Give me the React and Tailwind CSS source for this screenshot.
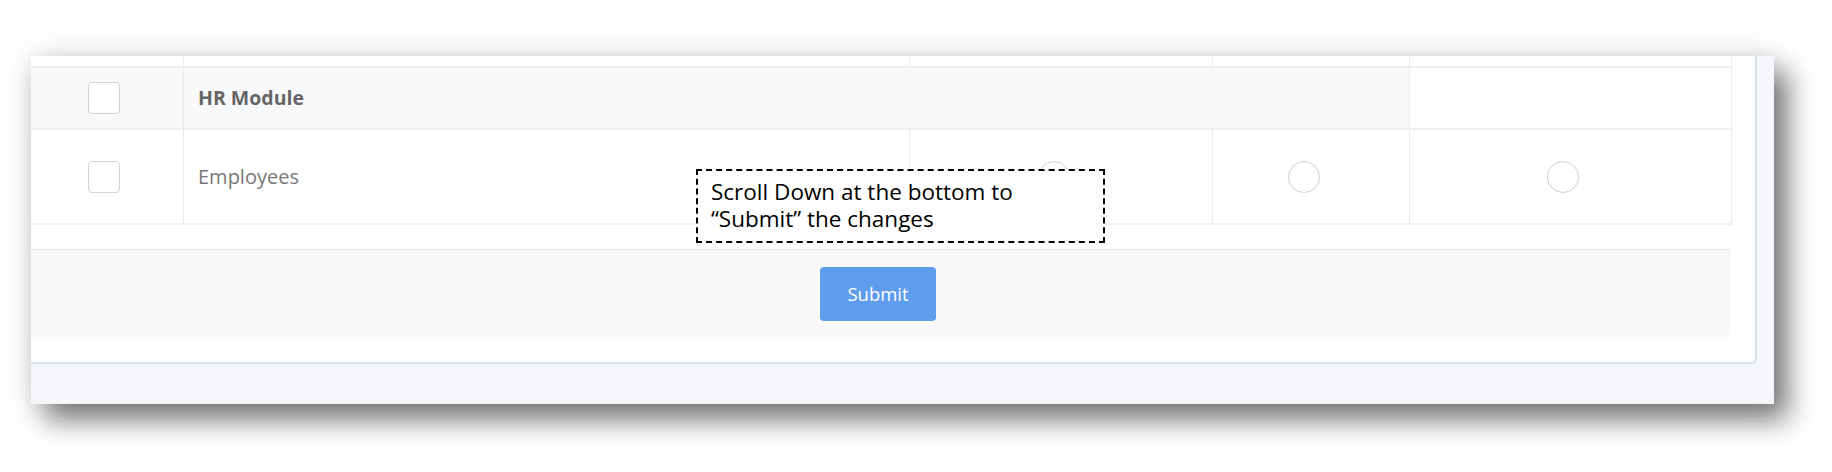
export default function App() {
  const cellBorder = "border-r border-[#ebebeb]";
  return (
    <div className="w-[1832px] h-[472px] bg-white pl-[31px] pt-[56px] font-['Open_Sans',sans-serif]">
      <div className="relative w-[1743px] h-[348px] bg-[#f5f6fa] shadow-[14px_16px_26px_rgba(0,0,0,0.5),0_0_28px_rgba(0,0,0,0.12)]">
        <div className="w-[1726px] h-[308px] bg-white border-r-2 border-b-2 border-[#dbe2e7] rounded-br-[5px] flex flex-col">
          <div className="w-[1701px]">
            <div className="flex h-[12px] border-b-2 border-[#efefef]">
              <div className={`w-[153px] ${cellBorder}`} />
              <div className={`w-[726px] ${cellBorder}`} />
              <div className={`w-[303px] ${cellBorder}`} />
              <div className={`w-[197px] ${cellBorder}`} />
              <div className={`w-[322px] ${cellBorder}`} />
            </div>
            <div className="flex h-[62px] border-b-2 border-[#efefef]">
              <div className={`w-[153px] ${cellBorder} bg-[#f8f9fa] flex items-center pl-[57px]`}>
                <div className="w-8 h-8 rounded-[4px] border border-[#d2d2d2] bg-white" />
              </div>
              <div className={`w-[1226px] ${cellBorder} bg-[#f8f9fa] flex items-center pl-[14px]`}>
                <span className="text-[19.5px] font-bold text-[#666666]">HR Module</span>
              </div>
              <div className={`w-[322px] ${cellBorder} bg-white`} />
            </div>
            <div className="flex h-[95px] border-b-2 border-[#efefef]">
              <div className={`w-[153px] ${cellBorder} flex items-center pl-[57px]`}>
                <div className="w-8 h-8 rounded-[4px] border border-[#d2d2d2] bg-white" />
              </div>
              <div className={`w-[726px] ${cellBorder} flex items-center pl-[14px]`}>
                <span className="text-[20px] text-[#777777]">Employees</span>
              </div>
              <div className={`w-[303px] ${cellBorder} flex items-center justify-center pr-[14px]`}>
                <div className="w-8 h-8 rounded-full border border-[#cfcfcf] bg-white" />
              </div>
              <div className={`w-[197px] ${cellBorder} flex items-center justify-center pr-[14px]`}>
                <div className="w-8 h-8 rounded-full border border-[#cfcfcf] bg-white" />
              </div>
              <div className={`w-[322px] ${cellBorder} flex items-center justify-center pr-[15px]`}>
                <div className="w-8 h-8 rounded-full border border-[#cfcfcf] bg-white" />
              </div>
            </div>
          </div>
          <div className="mt-[24px] w-[1700px] h-[88px] bg-[#f9f9f9] border-t-2 border-[#f0f0f0] rounded-br-[5px] flex items-center justify-center pr-[6px]">
            <button className="w-[116px] h-[54px] bg-[#5e9ced] rounded-[4px] text-white text-[18.5px]">
              Submit
            </button>
          </div>
        </div>
        <div className="absolute left-[665px] top-[113px] w-[409px] h-[74px] border-2 border-dashed border-black bg-white pl-[13px] pt-[7px] text-[22.5px] leading-[27px] text-black">
          <p>Scroll Down at the bottom to</p>
          <p>“Submit” the changes</p>
        </div>
      </div>
    </div>
  );
}
